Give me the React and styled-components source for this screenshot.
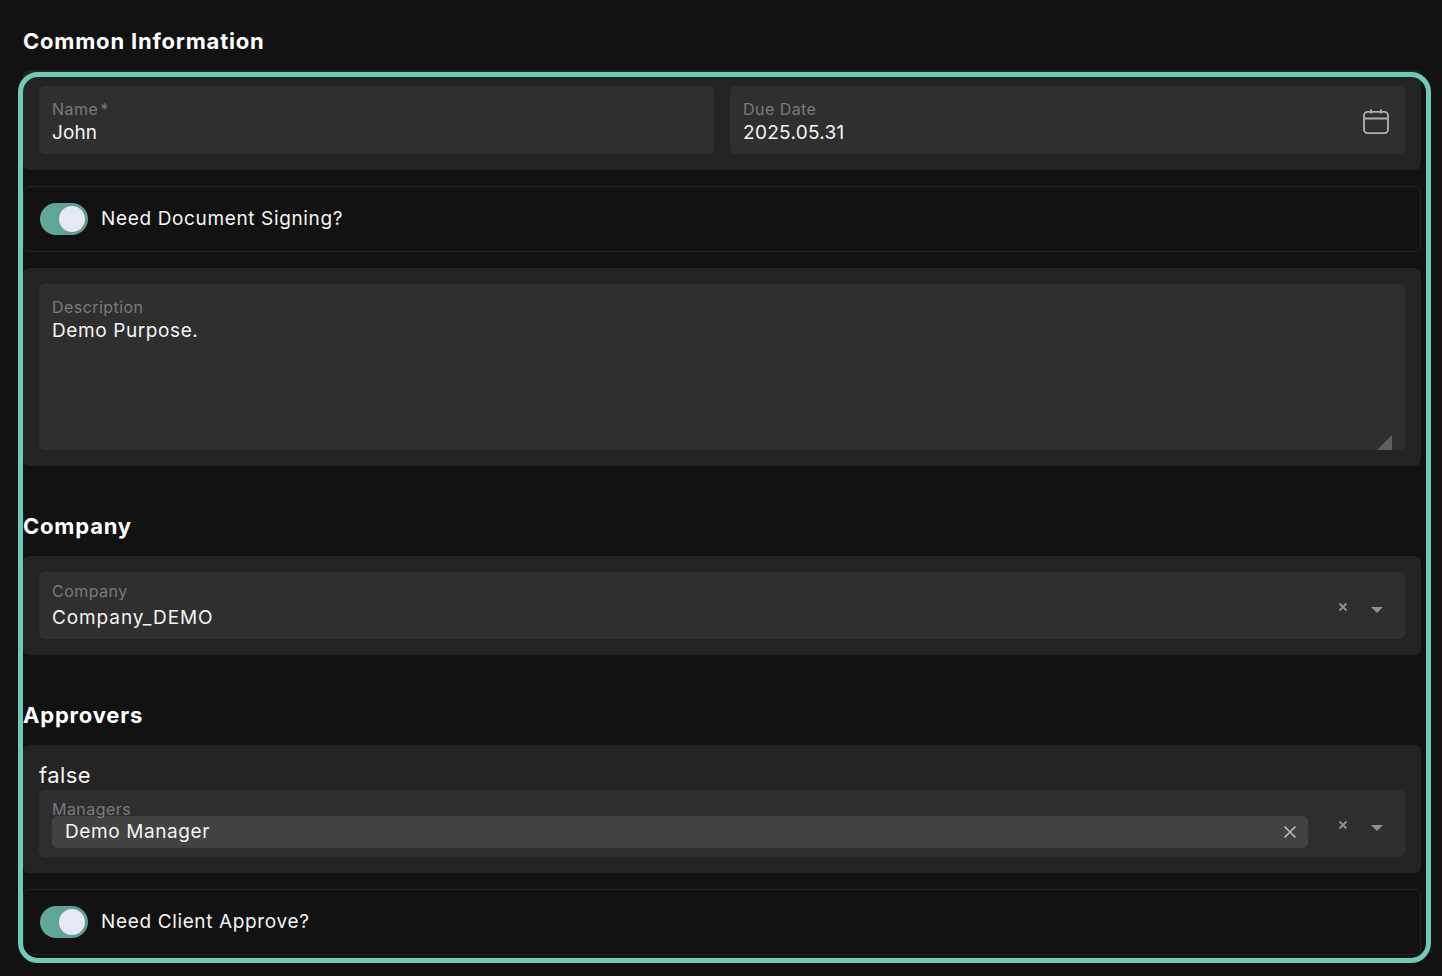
import React from "react"
import styled, { createGlobalStyle } from "styled-components"

const GlobalStyle = createGlobalStyle`
  html, body {
    margin: 0;
    background: #121212;
    font-family: "Inter", "Liberation Sans", sans-serif;
    color: #f4f4f4;
  }
`

const Page = styled.div`
  box-sizing: border-box;
  height: 976px;
  padding: 26px 21px 0 23px;
  overflow: hidden;
`

const Heading = styled.h2`
  margin: 0;
  height: 30px;
  font-size: 22px;
  line-height: 30px;
  font-weight: 700;
  letter-spacing: 0.8px;
  color: #fff;
`

const Section = styled.div`
  position: relative;
  margin-top: 14px;
  display: flex;
  flex-direction: column;
`

// teal focus ring, sits over the form and overhangs it
const Highlight = styled.div`
  position: absolute;
  top: 2px;
  left: -5px;
  right: -10px;
  bottom: 8px;
  border: 5px solid #6fcab8;
  border-radius: 20px;
  pointer-events: none;
`

const Panel = styled.div`
  display: flex;
  flex-direction: column;
  padding: 16px;
  border-radius: 6px;
  background: #232323;
`

const PanelRow = styled.div`
  display: grid;
  grid-template-columns: 1fr 1fr;
  gap: 16px;
`

const Field = styled.div`
  position: relative;
  box-sizing: border-box;
  height: ${(props) => props.height || 68}px;
  padding: ${(props) => (props.$select ? 10 : 14)}px 13px 0;
  border-radius: 6px;
  background: #2f2f2f;
`

// the label stays above the chip in the managers select
const Label = styled.div`
  position: relative;
  z-index: 1;
  font-size: 16px;
  line-height: 18px;
  letter-spacing: 0.45px;
  color: #7a7a7f;
`

const Star = styled.span`
  margin-left: 2px;
`

const Value = styled.div`
  margin-top: ${(props) => props.$offset || 2}px;
  font-size: 19px;
  line-height: 26px;
  letter-spacing: ${(props) => props.$spacing ?? 0.6}px;
  color: #f4f4f4;
`

const FieldIcon = styled.span`
  position: absolute;
  right: 15px;
  top: 22px;
  display: flex;
  color: #b0b0b0;
`

const Clear = styled.svg`
  position: absolute;
  right: 57px;
  top: 30px;
`

const Caret = styled.svg`
  position: absolute;
  right: 22px;
  top: 35px;
`

const Resizer = styled.svg`
  position: absolute;
  right: 13px;
  bottom: 0;
`

const ToggleRow = styled.div`
  box-sizing: border-box;
  height: 66px;
  margin: 16px 0;
  display: flex;
  align-items: center;
  gap: 13px;
  padding-left: 16px;
  border: 1px solid #232323;
  border-radius: 6px;
`

const ToggleLabel = styled.span`
  margin-top: -2px;
  font-size: 19px;
  letter-spacing: 0.64px;
  color: #f4f4f4;
`

const Track = styled.div`
  position: relative;
  width: 48px;
  height: 32px;
  border-radius: 16px;
  background: linear-gradient(90deg, #61a99b, #5b9d90);
`

const Knob = styled.div`
  position: absolute;
  top: 3px;
  right: 3px;
  width: 26px;
  height: 26px;
  border-radius: 50%;
  background: #e6e8f5;
`

const SubHeading = styled(Heading)`
  margin-top: 45px;
  margin-bottom: 15px;
`

const Plain = styled.div`
  height: 29px;
  font-size: 22px;
  line-height: 29px;
  letter-spacing: 0.4px;
  color: #f4f4f4;
`

const Chip = styled.div`
  position: relative;
  box-sizing: border-box;
  width: 1256px;
  height: 32px;
  margin-top: -2px;
  padding-left: 13px;
  border-radius: 6px;
  background: #424242;
  font-size: 19px;
  line-height: 31px;
  letter-spacing: 0.6px;
  color: #f4f4f4;
`

const ChipClose = styled.svg`
  position: absolute;
  right: 12px;
  top: 10px;
`

const ClearIcon = () => (
  <Clear width="10" height="10" viewBox="0 0 10 10">
    <path d="M1.5 1.5l7 7M8.5 1.5l-7 7" stroke="#8f8f94" strokeWidth="2" fill="none" />
  </Clear>
)

const CaretIcon = () => (
  <Caret width="12" height="6" viewBox="0 0 12 6">
    <path d="M0 0h12L6 6z" fill="#8f8f94" />
  </Caret>
)

const Toggle = ({ label }) => (
  <ToggleRow>
    <Track>
      <Knob />
    </Track>
    <ToggleLabel>{label}</ToggleLabel>
  </ToggleRow>
)

const App = () => (
  <Page>
    <GlobalStyle />
    <Heading>Common Information</Heading>
    <Section>
      <Panel>
        <PanelRow>
          <Field>
            <Label>
              Name<Star>*</Star>
            </Label>
            <Value $spacing={0.1}>John</Value>
          </Field>
          <Field>
            <Label>Due Date</Label>
            <Value $spacing={0.3}>2025.05.31</Value>
            <FieldIcon>
              <svg width="28" height="28" viewBox="0 0 28 28" fill="none" stroke="currentColor" strokeWidth="1.8">
                <rect x="2" y="3.9" width="24" height="21.2" rx="3.5" />
                <path d="M2 10.5h24M9 1.5v4M19 1.5v4" />
              </svg>
            </FieldIcon>
          </Field>
        </PanelRow>
      </Panel>
      <Toggle label="Need Document Signing?" />
      <Panel>
        <Field height={166}>
          <Label>Description</Label>
          <Value>Demo Purpose.</Value>
          <Resizer width="15" height="15" viewBox="0 0 15 15">
            <path d="M15 0v15H0z" fill="#5f5f63" />
          </Resizer>
        </Field>
      </Panel>
      <SubHeading>Company</SubHeading>
      <Panel>
        <Field $select height={67}>
          <Label>Company</Label>
          <Value $offset={5} $spacing={0.9}>Company_DEMO</Value>
          <ClearIcon />
          <CaretIcon />
        </Field>
      </Panel>
      <SubHeading>Approvers</SubHeading>
      <Panel>
        <Plain>false</Plain>
        <Field $select height={67}>
          <Label>Managers</Label>
          <Chip>
            Demo Manager
            <ChipClose width="12" height="12" viewBox="0 0 12 12">
              <path d="M.5.5l11 11M11.5.5l-11 11" stroke="#c4c4c4" strokeWidth="1.5" fill="none" />
            </ChipClose>
          </Chip>
          <ClearIcon />
          <CaretIcon />
        </Field>
      </Panel>
      <Toggle label="Need Client Approve?" />
      <Highlight />
    </Section>
  </Page>
)

export default App
